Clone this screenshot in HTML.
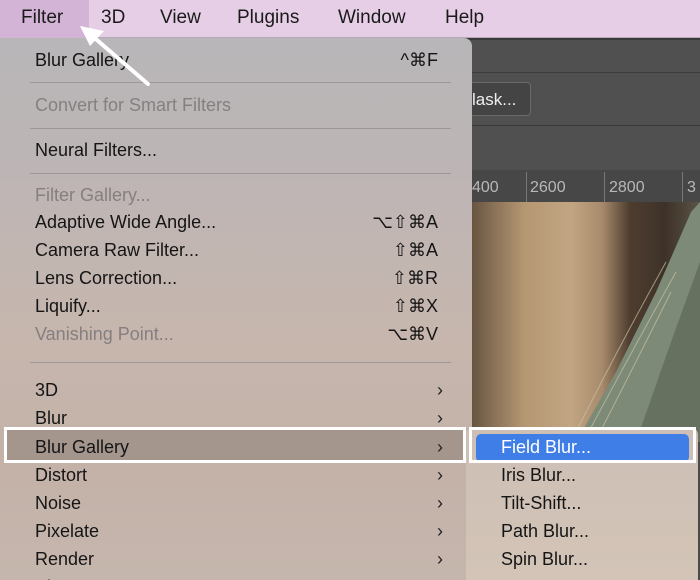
<!DOCTYPE html>
<html><head><style>
*{margin:0;padding:0;box-sizing:border-box}
html,body{width:700px;height:580px;overflow:hidden}
body{position:relative;font-family:"Liberation Sans","DejaVu Sans",sans-serif;background:#4a4a4a}
.bar{position:absolute;left:0;top:0;width:700px;height:38px;background:#e6cfe6;border-bottom:1px solid #b9a8b9}
.bar span{position:absolute;top:7px;font-size:19px;color:#1a1a1a}
.fsel{position:absolute;left:0;top:0;width:89px;height:38px;background:#d4b4d6;border-radius:0 0 6px 0}
.ps{position:absolute;left:466px;top:38px;width:234px;height:164px;background:#505050}
.menu{position:absolute;left:0;top:38px;width:472px;height:542px;border-radius:0 8px 0 0;background:linear-gradient(180deg,#b8b6b8 0%,#bdb5b5 25%,#c6b6ad 55%,#c4b2a8 80%,#c5b6ad 100%)}
.it{position:absolute;left:35px;font-size:18px;color:#151515;line-height:20px}
.dis{color:#857f80}
.sc{position:absolute;right:34px;font-size:18px;color:#151515;line-height:20px;text-align:right}
.chev{position:absolute;left:437px;font-size:18px;color:#222;line-height:20px}
.sep{position:absolute;left:30px;width:421px;height:1px;background:#9d9898}
.sub{position:absolute;left:466px;top:427px;width:232px;height:153px;border-radius:8px 8px 0 0;background:linear-gradient(180deg,#cdbfb5,#d3c4b7)}
.sit{position:absolute;left:501px;font-size:18px;color:#151515;line-height:20px}
</style></head><body>
<div class="bar">
<div class="fsel"></div>
<span style="left:21px">Filter</span>
<span style="left:101px">3D</span>
<span style="left:160px">View</span>
<span style="left:237px">Plugins</span>
<span style="left:338px">Window</span>
<span style="left:445px">Help</span>
</div>
<div class="ps">
<div style="position:absolute;left:0;top:0;width:234px;height:2px;background:#3a3a3a"></div>
<div style="position:absolute;left:0;top:34px;width:234px;height:1px;background:#3c3c3c"></div>
<div style="position:absolute;left:-20px;top:44px;width:85px;height:34px;border:1px solid #6a6a6a;border-radius:4px;background:#444"></div>
<div style="position:absolute;left:6px;top:52px;color:#eee;font-size:17px">lask...</div>
<div style="position:absolute;left:0;top:87px;width:234px;height:1px;background:#3c3c3c"></div>
<div style="position:absolute;left:0;top:132px;width:234px;height:32px;background:#474747"></div>
<div style="position:absolute;left:6px;top:141px;color:#b8b8b8;font-size:16px">400</div>
<div style="position:absolute;left:60px;top:134px;width:1px;height:30px;background:#777"></div>
<div style="position:absolute;left:64px;top:141px;color:#b8b8b8;font-size:16px">2600</div>
<div style="position:absolute;left:138px;top:134px;width:1px;height:30px;background:#777"></div>
<div style="position:absolute;left:143px;top:141px;color:#b8b8b8;font-size:16px">2800</div>
<div style="position:absolute;left:216px;top:134px;width:1px;height:30px;background:#777"></div>
<div style="position:absolute;left:221px;top:141px;color:#b8b8b8;font-size:16px">3</div>
</div>
<svg style="position:absolute;left:466px;top:202px" width="234" height="240">
<defs><linearGradient id="g" x1="0" x2="1"><stop offset="0" stop-color="#5e4c3a"/><stop offset=".12" stop-color="#8a7258"/><stop offset=".25" stop-color="#b59772"/><stop offset=".45" stop-color="#c2a582"/><stop offset=".58" stop-color="#a88b6c"/><stop offset=".7" stop-color="#4e3d2f"/><stop offset=".85" stop-color="#3e3228"/><stop offset="1" stop-color="#5a5446"/></linearGradient></defs>
<rect width="234" height="240" fill="url(#g)"/>
<polygon points="234,0 234,240 110,240 150,170 190,90 225,10" fill="#7d8a78"/>
<polygon points="234,60 234,240 170,240 205,140" fill="#5d6656" opacity=".7"/>
<path d="M110 230 Q150 150 200 60 M120 235 Q160 160 210 70 M130 238 Q165 170 205 90" stroke="#c9c2a0" stroke-width="1" fill="none" opacity=".7"/>
</svg>
<div class="menu">
<div class="it" style="top:12px">Blur Gallery</div><div class="sc" style="top:12px">^⌘F</div>
<div class="sep" style="top:44px"></div>
<div class="it dis" style="top:57px">Convert for Smart Filters</div>
<div class="sep" style="top:90px"></div>
<div class="it" style="top:102px">Neural Filters...</div>
<div class="sep" style="top:135px"></div>
<div class="it dis" style="top:147px">Filter Gallery...</div>
<div class="it" style="top:174px">Adaptive Wide Angle...</div><div class="sc" style="top:174px">⌥⇧⌘A</div>
<div class="it" style="top:202px">Camera Raw Filter...</div><div class="sc" style="top:202px">⇧⌘A</div>
<div class="it" style="top:230px">Lens Correction...</div><div class="sc" style="top:230px">⇧⌘R</div>
<div class="it" style="top:258px">Liquify...</div><div class="sc" style="top:258px">⇧⌘X</div>
<div class="it dis" style="top:286px">Vanishing Point...</div><div class="sc dis" style="top:286px">⌥⌘V</div>
<div class="sep" style="top:324px"></div>
<div class="it" style="top:342px">3D</div><div class="chev" style="top:342px">›</div>
<div class="it" style="top:370px">Blur</div><div class="chev" style="top:370px">›</div>
<div style="position:absolute;left:6px;top:390px;width:458px;height:32px;background:#a4968d"></div>
<div class="it" style="top:399px">Blur Gallery</div><div class="chev" style="top:399px">›</div>
<div class="it" style="top:427px">Distort</div><div class="chev" style="top:427px">›</div>
<div class="it" style="top:455px">Noise</div><div class="chev" style="top:455px">›</div>
<div class="it" style="top:483px">Pixelate</div><div class="chev" style="top:483px">›</div>
<div class="it" style="top:511px">Render</div><div class="chev" style="top:511px">›</div>
<div class="it" style="top:539px">Sharpen</div>
</div>
<div style="position:absolute;left:4px;top:427px;width:462px;height:36px;border:3px solid #fff"></div>
<div class="sub"></div>
<div style="position:absolute;left:476px;top:434px;width:213px;height:28px;background:#3f7ee6;border-radius:5px"></div>
<div style="position:absolute;left:469px;top:427px;width:227px;height:36px;border:3px solid #fff"></div>
<div class="sit" style="top:437px;color:#fff">Field Blur...</div>
<div class="sit" style="top:465px">Iris Blur...</div>
<div class="sit" style="top:493px">Tilt-Shift...</div>
<div class="sit" style="top:521px">Path Blur...</div>
<div class="sit" style="top:549px">Spin Blur...</div>
<svg style="position:absolute;left:0;top:0" width="200" height="110">
<line x1="148" y1="84" x2="90" y2="34" stroke="#fff" stroke-width="4" stroke-linecap="round"/>
<polygon points="80,26 104,31 90,46" fill="#fff"/>
</svg>
</body></html>
